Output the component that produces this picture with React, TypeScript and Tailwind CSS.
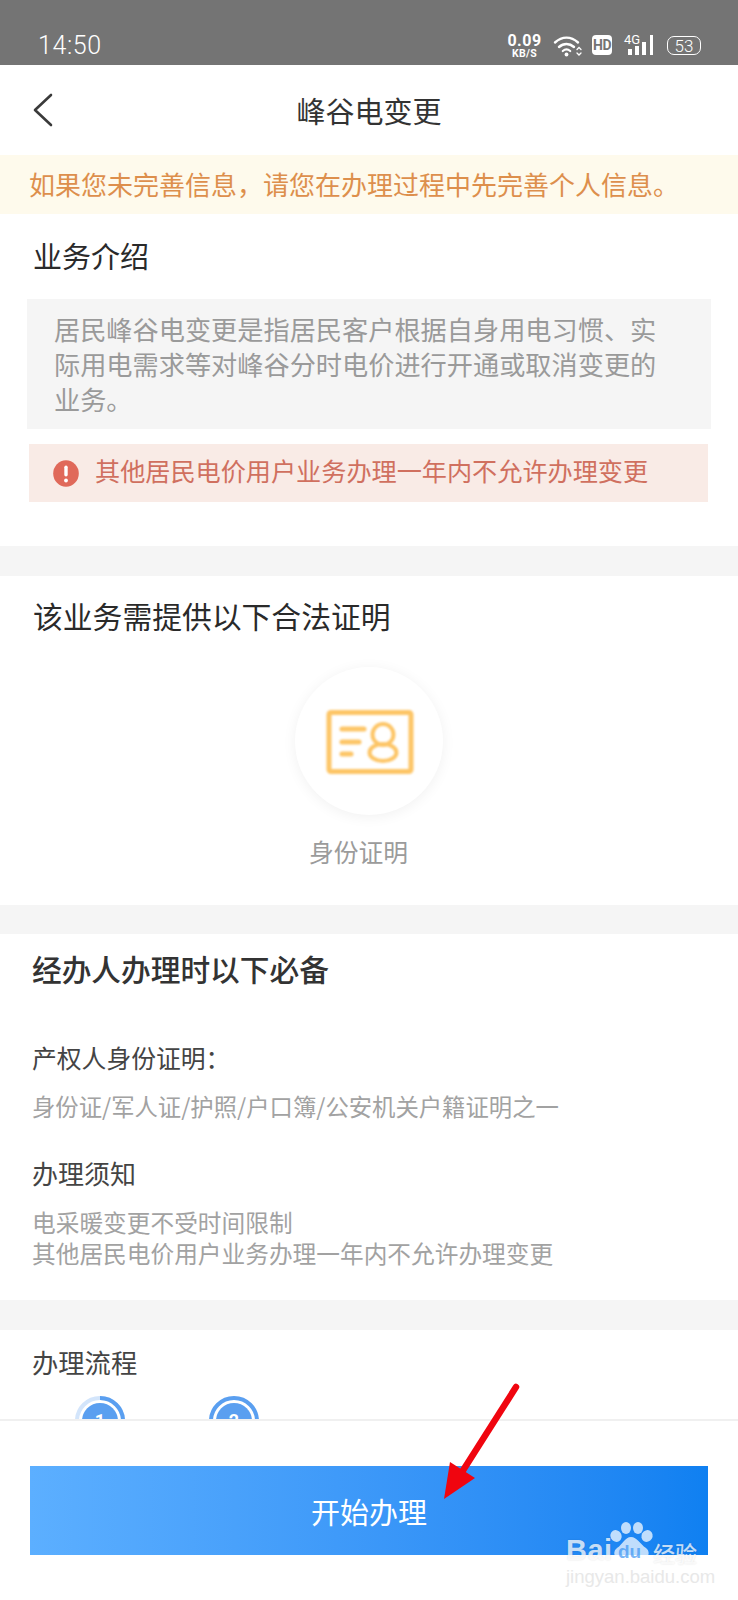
function StatusIcons() {
  return (
    <div className="flex items-start text-white font-['Roboto',sans-serif]">
      <div className="w-[37px] flex flex-col items-center mt-[-2px]">
        <span className="text-[16px] leading-[15px] font-bold tracking-[0.5px]">0.09</span>
        <span className="text-[10.5px] leading-[11px] font-bold tracking-[0.3px]">KB/S</span>
      </div>
      <svg className="ml-[10px]" width="30" height="22" viewBox="0 0 30 22" fill="none" stroke="white" strokeLinecap="round">
        <path d="M2 7.5C9 1 18 1 25 7.5" strokeWidth="2.4" />
        <path d="M6 12C10.5 8 16.5 8 21 12" strokeWidth="2.4" />
        <path d="M9.8 16C12 14.2 15 14.2 17.2 16" strokeWidth="2.2" />
        <circle cx="13.5" cy="19.5" r="1.9" fill="white" stroke="none" />
        <path d="M24 14.5L26 12.5L28 14.5M24 18L26 20L28 18" strokeWidth="1.3" />
      </svg>
      <div className="ml-[9px] w-[20px] h-[20px] rounded-[4px] bg-white flex items-center justify-center">
        <span className="text-[#747474] text-[14px] leading-[20px] font-bold tracking-[-0.5px]">HD</span>
      </div>
      <div className="relative ml-[12px] w-[30px] h-[20px]">
        <span className="absolute left-0 top-[-2px] text-[13px] leading-[13px]">4G</span>
        <div className="absolute left-[4px] bottom-0 flex items-end gap-[3px]">
          <div className="w-[4px] h-[6px] bg-white" />
          <div className="w-[4px] h-[9px] bg-white" />
          <div className="w-[4px] h-[13px] bg-white" />
          <div className="w-[3px] h-[20px] bg-white ml-[1px]" />
        </div>
      </div>
      <div className="ml-[13px] mt-[1px] w-[34px] h-[19px] rounded-[7px] border-[1.5px] border-white flex items-center justify-center">
        <span className="text-[17px] leading-[16px] font-light">53</span>
      </div>
    </div>
  );
}

function CardIcon() {
  return (
    <svg className="blur-[1px]" width="90" height="68" viewBox="0 0 90 68" fill="none" stroke="#fdc566" strokeLinecap="round">
      <rect x="5" y="5.5" width="82" height="59" rx="2" strokeWidth="5" />
      <path d="M18 22H40M18 35H35M18 47H27" strokeWidth="5" />
      <circle cx="59" cy="27.5" r="10.5" strokeWidth="4" />
      <ellipse cx="59" cy="45.5" rx="13.5" ry="8.5" strokeWidth="4" />
    </svg>
  );
}

function StepRing({ n, partial }: { n: string; partial?: boolean }) {
  return (
    <svg className="shrink-0" width="50" height="50" viewBox="0 0 50 50" fill="none">
      <circle cx="25" cy="25" r="23" stroke={partial ? "#d3e5fb" : "#5a9ff0"} strokeWidth="4" />
      {partial && <path d="M25 2A23 23 0 0 1 25 48A23 23 0 0 1 2 25" stroke="#5a9ff0" strokeWidth="4" />}
      <circle cx="25" cy="25" r="18" fill="#5a9ff0" />
      <text x="25" y="31" textAnchor="middle" fontSize="18" fontWeight="700" fill="white" fontFamily="Roboto, sans-serif">{n}</text>
    </svg>
  );
}

function Watermark() {
  return (
    <div className="absolute left-[566px] top-[1522px] w-[140px] h-[64px] text-white/75 [text-shadow:0_0_2px_rgba(0,0,0,0.12)]">
      <span className="absolute left-0 top-[12px] text-[29px] leading-[32px] font-bold font-['Liberation_Sans',sans-serif] tracking-[0.5px]">Bai</span>
      <svg className="absolute left-[44px] top-0" width="46" height="42" viewBox="0 0 46 42" fill="#ffffff" fillOpacity="0.72">
        <ellipse cx="16" cy="6" rx="5" ry="6" />
        <ellipse cx="28" cy="6" rx="5" ry="6" />
        <ellipse cx="6" cy="14" rx="5.5" ry="6" transform="rotate(-30 6 14)" />
        <ellipse cx="37" cy="14" rx="5.5" ry="6" transform="rotate(30 37 14)" />
        <path d="M21 15C27 15 30 22 36 26C42 31 37 39 30 38C25 37 18 37 13 38C6 39 1 31 7 26C13 22 15 15 21 15Z" />
      </svg>
      <span className="absolute left-[52px] top-[20px] text-[19px] leading-[20px] font-bold font-['Liberation_Sans',sans-serif] text-[#3b94f2]/70 [text-shadow:none]">du</span>
      <span className="absolute left-[87px] top-[18px] text-[22px] leading-[24px] font-medium whitespace-nowrap">经验</span>
      <span className="absolute left-0 top-[44px] text-[18.5px] leading-[22px] whitespace-nowrap font-['Liberation_Sans',sans-serif] text-[#e8e8e8] [text-shadow:none]">jingyan.baidu.com</span>
    </div>
  );
}

export default function App() {
  return (
    <div className="relative w-[738px] h-[1600px] bg-white overflow-hidden flex flex-col font-['Noto_Sans_CJK_SC','Noto_Sans',sans-serif]">
      <div className="h-[65px] shrink-0 bg-[#747474] flex items-start justify-between pl-[38px] pr-[37px] pt-[35px]">
        <span className="text-white text-[25px] leading-[20px] mt-[1px] font-['Roboto',sans-serif] font-light tracking-[0.6px]">14:50</span>
        <StatusIcons />
      </div>

      <div className="h-[1354px] shrink-0 overflow-hidden">
        <div className="relative h-[90px] flex items-center justify-center">
          <svg className="absolute left-[32px] top-[28px]" width="22" height="34" viewBox="0 0 22 34" fill="none" stroke="#3a3a3a" strokeWidth="2.6" strokeLinecap="round" strokeLinejoin="round">
            <path d="M19 2L3 17L19 32" />
          </svg>
          <span className="text-[29px] leading-[40px] text-[#333333]">峰谷电变更</span>
        </div>

        <div className="h-[59px] bg-[#fefaec] flex items-center pl-[29px] text-[#dd8f4c] whitespace-nowrap">
          <span className="mb-[2px] text-[26px] leading-[36px]">如果您未完善信息，请您在办理过程中先完善个人信息。</span>
        </div>

        <div className="pt-[21px] pb-[44px]">
          <h2 className="pl-[33px] text-[29px] leading-[40px] font-normal text-[#2a2a2a]">业务介绍</h2>
          <div className="mx-[27px] mt-[24px] h-[130px] bg-[#f5f5f5] pl-[27px] pr-[48px] pt-[13px] text-[26.2px] leading-[35px] text-[#9a9a9a]">
            居民峰谷电变更是指居民客户根据自身用电习惯、实际用电需求等对峰谷分时电价进行开通或取消变更的业务。
          </div>
          <div className="mx-[29px] w-[679px] mt-[15px] h-[58px] bg-[#f9ebe6] flex items-center pl-[24px]">
            <svg className="shrink-0" width="26" height="27" viewBox="0 0 26 27">
              <ellipse cx="13" cy="13.5" rx="12.8" ry="13.2" fill="#e0695a" />
              <rect x="11.3" y="5.5" width="3.4" height="11" rx="1.7" fill="white" />
              <circle cx="13" cy="20.5" r="1.9" fill="white" />
            </svg>
            <span className="ml-[16px] mb-[6px] text-[25.15px] leading-[36px] text-[#d0705f] whitespace-nowrap">其他居民电价用户业务办理一年内不允许办理变更</span>
          </div>
        </div>

        <div className="h-[30px] bg-[#f5f5f5]" />

        <div className="pt-[19px] pb-[37px] flex flex-col">
          <h2 className="pl-[33px] text-[29.8px] leading-[40px] font-normal text-[#2a2a2a]">该业务需提供以下合法证明</h2>
          <div className="self-center mt-[32px] w-[148px] h-[148px] rounded-full bg-white shadow-[0_2px_14px_rgba(0,0,0,0.06)] flex items-center justify-center">
            <CardIcon />
          </div>
          <span className="self-center mr-[21px] mt-[19px] text-[24.8px] leading-[34px] text-[#9b9b9b]">身份证明</span>
        </div>

        <div className="h-[29px] bg-[#f5f5f5]" />

        <div className="pl-[32px] pt-[15px] pb-[31px]">
          <h2 className="text-[29.7px] leading-[40px] font-medium text-[#333333]">经办人办理时以下必备</h2>
          <h3 className="mt-[50px] text-[24.8px] leading-[36px] font-normal text-[#444444]">产权人身份证明：</h3>
          <p className="mt-[15px] text-[23.35px] leading-[32px] text-[#a2a2a2]">身份证/军人证/护照/户口簿/公安机关户籍证明之一</p>
          <h3 className="mt-[33px] text-[26px] leading-[36px] font-normal text-[#444444]">办理须知</h3>
          <p className="mt-[16px] text-[23.7px] leading-[31px] text-[#a2a2a2]">
            电采暖变更不受时间限制
            <br />
            其他居民电价用户业务办理一年内不允许办理变更
          </p>
        </div>

        <div className="h-[30px] bg-[#f5f5f5]" />

        <div className="pl-[32px] pt-[14px]">
          <h3 className="text-[26.3px] leading-[36px] font-normal text-[#444444]">办理流程</h3>
          <div className="mt-[16px] ml-[43px] flex gap-[84px]">
            <StepRing n="1" partial />
            <StepRing n="2" />
          </div>
        </div>
      </div>

      <div className="flex-1 border-t-2 border-[#f0f0f0] pt-[45px] px-[30px]">
        <div className="h-[89px] w-[678px] bg-gradient-to-r from-[#5cafff] to-[#0f80f1] flex items-center justify-center text-white text-[29px] leading-[40px]">
          开始办理
        </div>
      </div>

      <svg className="absolute left-0 top-0 pointer-events-none" width="738" height="1600" viewBox="0 0 738 1600" fill="none">
        <path d="M516 1387L462 1472" stroke="#f0050f" strokeWidth="6.5" strokeLinecap="round" />
        <path d="M450 1462L475 1478L444 1499Z" fill="#f0050f" />
      </svg>
      <Watermark />
    </div>
  );
}
